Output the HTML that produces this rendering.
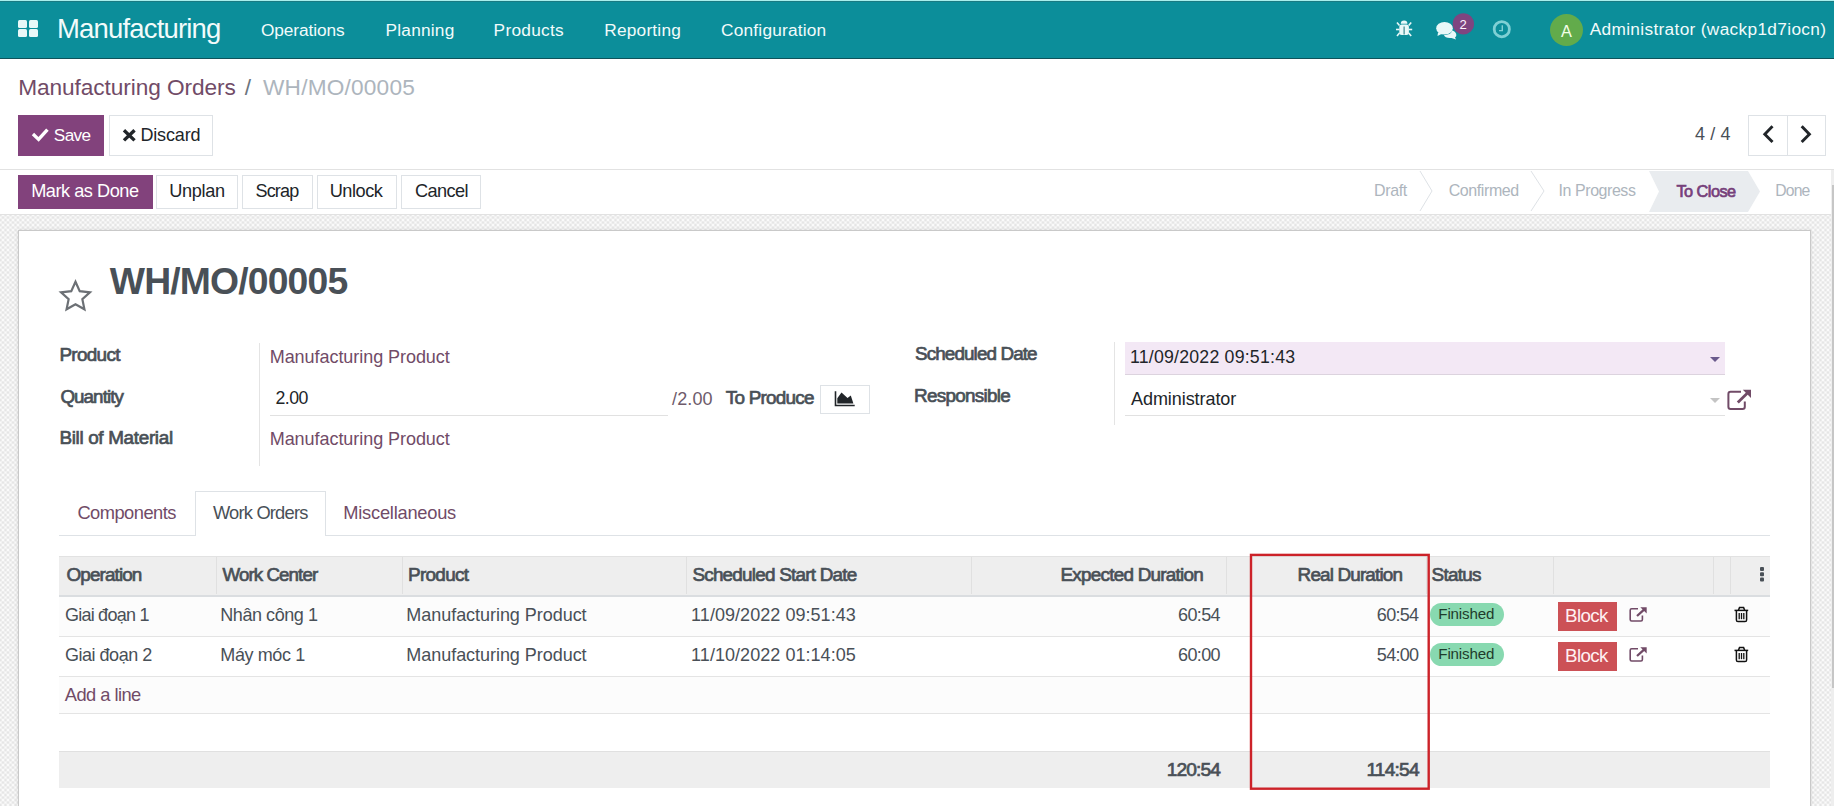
<!DOCTYPE html>
<html><head><meta charset="utf-8"><style>
*{margin:0;padding:0;box-sizing:border-box;}
html,body{width:1834px;height:806px;overflow:hidden;background:#fff;font-family:"Liberation Sans",sans-serif;}
.t{position:absolute;white-space:nowrap;}
.a{position:absolute;}
.bg{position:absolute;left:0;top:215px;width:1834px;height:591px;background-color:#FAFAFA;
 background-image:radial-gradient(circle at 2.5px 2.5px,#E2E2E2 0.6px,rgba(226,226,226,0) 2px),radial-gradient(circle at 2.5px 2.5px,#E2E2E2 0.6px,rgba(226,226,226,0) 2px);
 background-size:5px 5px,5px 5px;background-position:0.5px 0,3px 2.5px;}

</style></head><body>
<!-- navbar -->
<div class="a" style="left:0;top:0;width:1834px;height:59px;background:#0C8E9A;"></div>
<div class="a" style="left:0;top:0;width:1834px;height:1px;background:#A9EEEC;"></div>
<div class="a" style="left:0;top:1px;width:1834px;height:1px;background:#1A7A82;"></div>
<div class="a" style="left:0;top:58px;width:1834px;height:1px;background:#0F535B;"></div>
<!-- grid icon -->
<div class="a" style="left:18px;top:20px;width:9px;height:8px;background:#E9F8F8;border-radius:1.5px;"></div>
<div class="a" style="left:29px;top:20px;width:9px;height:8px;background:#E9F8F8;border-radius:1.5px;"></div>
<div class="a" style="left:18px;top:29px;width:9px;height:8px;background:#E9F8F8;border-radius:1.5px;"></div>
<div class="a" style="left:29px;top:29px;width:9px;height:8px;background:#E9F8F8;border-radius:1.5px;"></div>
<!-- systray -->
<div class="a" style="left:1453px;top:14px;width:21px;height:20px;border-radius:10px;background:#7E4580;"></div>
<div class="a" style="left:1550px;top:14px;width:33px;height:32px;border-radius:50%;background:#62AB4B;"></div>
<!-- control panel -->
<div class="a" style="left:0;top:169px;width:1834px;height:1px;background:#E2E2E2;"></div>
<div class="a" style="left:18px;top:115px;width:86px;height:41px;background:#82427C;"></div>
<div class="a" style="left:109px;top:115px;width:104px;height:41px;border:1px solid #DEE2E6;background:#fff;"></div>
<div class="a" style="left:1748px;top:115px;width:78px;height:41px;border:1px solid #DEE2E6;"></div>
<div class="a" style="left:1787px;top:115px;width:1px;height:41px;background:#DEE2E6;"></div>
<!-- statusbar -->
<div class="a" style="left:0;top:214px;width:1834px;height:1px;background:#E2E2E2;"></div>
<div class="a" style="left:18px;top:175px;width:135px;height:34px;background:#82427C;"></div>
<div class="a" style="left:156px;top:175px;width:82px;height:34px;border:1px solid #DEE2E6;"></div>
<div class="a" style="left:242px;top:175px;width:71px;height:34px;border:1px solid #DEE2E6;"></div>
<div class="a" style="left:317px;top:175px;width:80px;height:34px;border:1px solid #DEE2E6;"></div>
<div class="a" style="left:401px;top:175px;width:80px;height:34px;border:1px solid #DEE2E6;"></div>
<svg class="a" style="left:0;top:0" width="1834" height="806">
 <polyline points="1420,171 1432,191 1420,211" fill="none" stroke="#DEE2E6" stroke-width="1"/>
 <polyline points="1531,171 1544,191 1531,211" fill="none" stroke="#DEE2E6" stroke-width="1"/>
 <polygon points="1649,171 1748,171 1760,191.5 1748,212 1649,212 1659,191.5" fill="#E9ECEF"/>
</svg>

<!-- background -->
<div class="bg"></div>
<!-- sheet -->
<div class="a" style="left:18px;top:230px;width:1793px;height:600px;background:#fff;border:1px solid #C9C9C9;box-shadow:0 0 3px rgba(0,0,0,0.12);"></div>
<!-- sheet separators -->
<div class="a" style="left:259px;top:343px;width:1px;height:123px;background:#E4E4E4;"></div>
<div class="a" style="left:1114px;top:342px;width:1px;height:83px;background:#E4E4E4;"></div>
<div class="a" style="left:270px;top:415px;width:398px;height:1px;background:#E1E1E1;"></div>
<div class="a" style="left:820px;top:385px;width:50px;height:29px;border:1px solid #DEE2E6;"></div>
<div class="a" style="left:1125px;top:342px;width:600px;height:33px;background:#F3E8F5;border-bottom:1px solid #DCD3DE;"></div>
<div class="a" style="left:1125px;top:415px;width:600px;height:1px;background:#E1E1E1;"></div>
<svg class="a" style="left:0;top:0" width="1834" height="806">
 <polygon points="1710,357 1720,357 1715,362" fill="#6A5A8C"/>
 <polygon points="1710,398 1720,398 1715,403" fill="#C4C4C4"/>
 <!-- area chart -->
 <polyline points="835.5,391.2 835.5,405.5 854.7,405.5" fill="none" stroke="#212529" stroke-width="1.6"/>
 <polygon points="837.3,403.5 837.3,398.3 841.5,392.6 847.5,398.1 850.8,395.4 853.4,403.5" fill="#212529"/>
 <!-- external link (responsible) -->
 <path d="M1741,391.8 H1730.6 Q1728.4,391.8 1728.4,394 V406.8 Q1728.4,409 1730.6,409 H1742.6 Q1744.8,409 1744.8,406.8 V401.5" fill="none" stroke="#714B67" stroke-width="2"/>
 <line x1="1737.8" y1="402.5" x2="1747.5" y2="393" stroke="#714B67" stroke-width="2.8"/>
 <polygon points="1742.8,389.8 1751,389.8 1751,398" fill="#714B67"/>
</svg>
<!-- tabs -->
<div class="a" style="left:59px;top:535px;width:1711px;height:1px;background:#DEE2E6;"></div>
<div class="a" style="left:195px;top:491px;width:131px;height:45px;background:#fff;border:1px solid #DEE2E6;border-bottom:none;"></div>
<!-- table -->
<div class="a" style="left:59px;top:556px;width:1711px;height:41px;background:#EEEEEE;border-top:1px solid #E2E2E2;border-bottom:2px solid #DADDE0;"></div>
<div class="a" style="left:59px;top:597px;width:1711px;height:40px;background:#FCFCFC;border-bottom:1px solid #E4E4E4;"></div>
<div class="a" style="left:59px;top:637px;width:1711px;height:40px;background:#FFFFFF;border-bottom:1px solid #E4E4E4;"></div>
<div class="a" style="left:59px;top:677px;width:1711px;height:37px;background:#FCFCFC;border-bottom:1px solid #E4E4E4;"></div>
<div class="a" style="left:59px;top:751px;width:1711px;height:37px;background:#EEEEEE;border-top:1px solid #E0E0E0;"></div>
<div class="a" style="left:216px;top:557px;width:1px;height:37px;background:#E0E0E0;"></div>
<div class="a" style="left:402px;top:557px;width:1px;height:37px;background:#E0E0E0;"></div>
<div class="a" style="left:686px;top:557px;width:1px;height:37px;background:#E0E0E0;"></div>
<div class="a" style="left:971px;top:557px;width:1px;height:37px;background:#E0E0E0;"></div>
<div class="a" style="left:1226px;top:557px;width:1px;height:37px;background:#E0E0E0;"></div>
<div class="a" style="left:1426px;top:557px;width:1px;height:37px;background:#E0E0E0;"></div>
<div class="a" style="left:1553px;top:557px;width:1px;height:37px;background:#E0E0E0;"></div>
<div class="a" style="left:1713px;top:557px;width:1px;height:37px;background:#E0E0E0;"></div>
<div class="a" style="left:1730px;top:557px;width:1px;height:37px;background:#E0E0E0;"></div>
<!-- badges & buttons -->
<div class="a" style="left:1430px;top:603px;width:74px;height:23px;border-radius:11.5px;background:#88D9B0;"></div>
<div class="a" style="left:1430px;top:643px;width:74px;height:23px;border-radius:11.5px;background:#88D9B0;"></div>
<div class="a" style="left:1558px;top:602px;width:59px;height:29px;background:#CC5156;"></div>
<div class="a" style="left:1558px;top:642px;width:59px;height:29px;background:#CC5156;"></div>
<svg class="a" style="left:0;top:0" width="1834" height="806">
 <g id="ext">
 <path d="M1638,608.8 H1631.6 Q1630.2,608.8 1630.2,610.2 V619.6 Q1630.2,621 1631.6,621 H1641 Q1642.4,621 1642.4,619.6 V615.5" fill="none" stroke="#714B67" stroke-width="1.6"/>
 <line x1="1637" y1="616" x2="1644.6" y2="609.2" stroke="#714B67" stroke-width="2.3"/>
 <polygon points="1640.3,607.2 1646.7,607.2 1646.7,613.4" fill="#714B67"/>
 </g>
 <use href="#ext" y="40"/>
 <g id="trash" fill="none" stroke="#111" stroke-width="1.5">
  <line x1="1734.5" y1="610.4" x2="1748.2" y2="610.4"/>
  <path d="M1738.5,610 L1739.5,607.6 H1743.6 L1744.6,610"/>
  <path d="M1736.4,610.5 V620 Q1736.4,621.6 1738,621.6 H1745 Q1746.6,621.6 1746.6,620 V610.5"/>
  <line x1="1739.2" y1="613" x2="1739.2" y2="619.2" stroke-width="1.3"/>
  <line x1="1741.5" y1="613" x2="1741.5" y2="619.2" stroke-width="1.3"/>
  <line x1="1743.8" y1="613" x2="1743.8" y2="619.2" stroke-width="1.3"/>
 </g>
 <use href="#trash" y="40"/>
 <g fill="#495057"><rect x="1760" y="567" width="4" height="4" rx="1"/><rect x="1760" y="572.3" width="4" height="4" rx="1"/><rect x="1760" y="577.5" width="4" height="4" rx="1"/></g>
 <!-- red box -->
 <rect x="1251" y="554.9" width="177.7" height="233.8" fill="none" stroke="#CC2229" stroke-width="2.4"/>
</svg>
<div class="a" style="left:1831px;top:170px;width:3px;height:636px;background:#EEEEEE;"></div>
<div class="a" style="left:1832px;top:185px;width:1.5px;height:503px;background:#C6C6C6;"></div>
<svg class="a" style="left:0;top:0" width="1834" height="806">
 <!-- bug -->
 <g fill="#E9F8F8" stroke="#E9F8F8">
  <path d="M1400.8,23.8 A3.3,3.2 0 0 1 1407.4,23.8 Z" stroke="none"/>
  <rect x="1399.3" y="24.6" width="9.6" height="10.4" rx="2.5" stroke="none"/>
  <g stroke-width="1.6" fill="none">
   <line x1="1399.5" y1="25.5" x2="1397" y2="22.5"/><line x1="1408.7" y1="25.5" x2="1411.2" y2="22.5"/>
   <line x1="1396" y1="29.5" x2="1399.5" y2="29.5"/><line x1="1408.7" y1="29.5" x2="1412.2" y2="29.5"/>
   <line x1="1399.5" y1="33" x2="1397" y2="36"/><line x1="1408.7" y1="33" x2="1411.2" y2="36"/>
  </g>
 </g>
 <rect x="1403.4" y="26.5" width="1.5" height="8" fill="#5E9EA4"/>
 <!-- chat -->
 <ellipse cx="1444.5" cy="28.2" rx="8.3" ry="6.3" fill="#E9F8F8"/>
 <path d="M1438,32.5 L1437.5,36 L1442.5,33.5 Z" fill="#E9F8F8"/>
 <path d="M1452,30.5 C1456.5,31.5 1457.5,36 1455,37.5 L1456,39.5 L1451.5,38 C1447.5,38.5 1444.5,37 1444,35 C1448.5,35 1451.5,33.5 1452,30.5 Z" fill="#E9F8F8"/>
 <!-- badge over chat -->
 <circle cx="1463.3" cy="23.8" r="10.6" fill="#7E4580"/>
 <!-- clock -->
 <circle cx="1501.8" cy="29.2" r="7.6" fill="none" stroke="#7FD0D4" stroke-width="2.8"/>
 <polyline points="1502.3,25.3 1502.3,30.6 1499,30.6" fill="none" stroke="#7FD0D4" stroke-width="1.4"/>
 <!-- check -->
 <polyline points="34.2,135.2 38.6,139.4 46.3,130.8" fill="none" stroke="#FFFFFF" stroke-width="3.4" stroke-linecap="square"/>
 <!-- x -->
 <g stroke="#212529" stroke-width="3.4" stroke-linecap="square">
  <line x1="125.2" y1="131.5" x2="133.3" y2="139.2"/><line x1="133.3" y1="131.5" x2="125.2" y2="139.2"/>
 </g>
 <!-- pager chevrons -->
 <polyline points="1771.5,127.3 1764.8,134.2 1771.5,141" fill="none" stroke="#212529" stroke-width="2.9" stroke-linecap="square"/>
 <polyline points="1802.7,127.3 1809.4,134.2 1802.7,141" fill="none" stroke="#212529" stroke-width="2.9" stroke-linecap="square"/>
 <!-- star -->
 <polygon id="star" fill="none" stroke="#6C7075" stroke-width="2.2" stroke-linejoin="miter" points="75.50,281.80 79.73,291.18 89.96,292.30 82.35,299.22 84.43,309.30 75.50,304.20 66.57,309.30 68.65,299.22 61.04,292.30 71.27,291.18"/>
</svg>

<div class="t" style="left:57.00px;top:15.44px;font-size:27.47px;line-height:27.47px;color:#F2FBFB;letter-spacing:-0.816px;">Manufacturing</div>
<div class="t" style="left:261.00px;top:21.65px;font-size:17.3px;line-height:17.3px;color:#F2FBFB;letter-spacing:-0.099px;">Operations</div>
<div class="t" style="left:385.60px;top:21.65px;font-size:17.3px;line-height:17.3px;color:#F2FBFB;letter-spacing:0.207px;">Planning</div>
<div class="t" style="left:493.60px;top:21.65px;font-size:17.3px;line-height:17.3px;color:#F2FBFB;letter-spacing:0.263px;">Products</div>
<div class="t" style="left:604.30px;top:21.65px;font-size:17.3px;line-height:17.3px;color:#F2FBFB;letter-spacing:0.198px;">Reporting</div>
<div class="t" style="left:721.10px;top:21.65px;font-size:17.3px;line-height:17.3px;color:#F2FBFB;letter-spacing:0.193px;">Configuration</div>
<div class="t" style="left:1589.70px;top:21.45px;font-size:17.3px;line-height:17.3px;color:#F2FBFB;letter-spacing:0.320px;">Administrator (wackp1d7iocn)</div>
<div class="t" style="left:1561.00px;top:22.82px;font-size:16.28px;line-height:16.28px;color:#F4FFE8;">A</div>
<div class="t" style="left:1459.60px;top:17.63px;font-size:13.08px;line-height:13.08px;color:#FFF4FF;">2</div>
<div class="t" style="left:18.20px;top:76.21px;font-size:22.67px;line-height:22.67px;color:#714B67;letter-spacing:-0.073px;">Manufacturing Orders</div>
<div class="t" style="left:244.70px;top:76.21px;font-size:22.67px;line-height:22.67px;color:#6C757D;">/</div>
<div class="t" style="left:263.00px;top:76.21px;font-size:22.67px;line-height:22.67px;color:#ADB5BD;letter-spacing:0.197px;">WH/MO/00005</div>
<div class="t" style="left:53.80px;top:126.75px;font-size:17.19px;line-height:17.19px;color:#FFFFFF;letter-spacing:-0.606px;">Save</div>
<div class="t" style="left:140.40px;top:126.04px;font-size:18.02px;line-height:18.02px;color:#212529;letter-spacing:-0.158px;">Discard</div>
<div class="t" style="left:1695.10px;top:125.14px;font-size:18.02px;line-height:18.02px;color:#495057;letter-spacing:0.066px;">4 / 4</div>
<div class="t" style="left:31.20px;top:182.02px;font-size:18.17px;line-height:18.17px;color:#FFFFFF;letter-spacing:-0.474px;">Mark as Done</div>
<div class="t" style="left:169.30px;top:182.02px;font-size:18.17px;line-height:18.17px;color:#212529;letter-spacing:-0.348px;">Unplan</div>
<div class="t" style="left:255.50px;top:182.16px;font-size:18.0px;line-height:18.0px;color:#212529;letter-spacing:-0.828px;">Scrap</div>
<div class="t" style="left:329.70px;top:182.02px;font-size:18.17px;line-height:18.17px;color:#212529;letter-spacing:-0.464px;">Unlock</div>
<div class="t" style="left:415.00px;top:182.02px;font-size:18.17px;line-height:18.17px;color:#212529;letter-spacing:-0.597px;">Cancel</div>
<div class="t" style="left:1374.00px;top:183.06px;font-size:15.99px;line-height:15.99px;color:#ADB5BD;letter-spacing:-0.349px;">Draft</div>
<div class="t" style="left:1448.70px;top:183.06px;font-size:15.99px;line-height:15.99px;color:#ADB5BD;letter-spacing:-0.405px;">Confirmed</div>
<div class="t" style="left:1558.60px;top:183.06px;font-size:15.99px;line-height:15.99px;color:#ADB5BD;letter-spacing:-0.444px;">In Progress</div>
<div class="t" style="left:1775.30px;top:183.29px;font-size:15.72px;line-height:15.72px;color:#ADB5BD;letter-spacing:-0.845px;">Done</div>
<div class="t" style="left:1676.50px;top:182.72px;font-size:16.28px;line-height:16.28px;color:#76407A;-webkit-text-stroke:0.7px #76407A;letter-spacing:-0.534px;">To Close</div>
<div class="t" style="left:109.80px;top:262.60px;font-size:37.32px;line-height:37.32px;color:#495057;font-weight:700;letter-spacing:-0.841px;">WH/MO/00005</div>
<div class="t" style="left:59.40px;top:345.60px;font-size:18.9px;line-height:18.9px;color:#495057;-webkit-text-stroke:0.7px #495057;letter-spacing:-0.676px;">Product</div>
<div class="t" style="left:60.40px;top:387.51px;font-size:18.77px;line-height:18.77px;color:#495057;-webkit-text-stroke:0.7px #495057;letter-spacing:-0.915px;">Quantity</div>
<div class="t" style="left:59.40px;top:428.50px;font-size:18.9px;line-height:18.9px;color:#495057;-webkit-text-stroke:0.7px #495057;letter-spacing:-0.329px;">Bill of Material</div>
<div class="t" style="left:915.00px;top:345.11px;font-size:18.88px;line-height:18.88px;color:#495057;-webkit-text-stroke:0.7px #495057;letter-spacing:-0.894px;">Scheduled Date</div>
<div class="t" style="left:914.00px;top:387.40px;font-size:18.9px;line-height:18.9px;color:#495057;-webkit-text-stroke:0.7px #495057;letter-spacing:-0.716px;">Responsible</div>
<div class="t" style="left:269.70px;top:348.44px;font-size:18.02px;line-height:18.02px;color:#714B67;letter-spacing:-0.058px;">Manufacturing Product</div>
<div class="t" style="left:275.60px;top:390.39px;font-size:17.73px;line-height:17.73px;color:#212529;letter-spacing:-0.610px;">2.00</div>
<div class="t" style="left:269.70px;top:430.34px;font-size:18.02px;line-height:18.02px;color:#714B67;letter-spacing:-0.058px;">Manufacturing Product</div>
<div class="t" style="left:672.00px;top:389.74px;font-size:18.02px;line-height:18.02px;color:#6E5B6B;letter-spacing:0.138px;">/2.00</div>
<div class="t" style="left:725.70px;top:389.00px;font-size:18.9px;line-height:18.9px;color:#495057;-webkit-text-stroke:0.7px #495057;letter-spacing:-0.750px;">To Produce</div>
<div class="t" style="left:1130.00px;top:349.09px;font-size:17.73px;line-height:17.73px;color:#212529;letter-spacing:0.211px;">11/09/2022 09:51:43</div>
<div class="t" style="left:1131.00px;top:390.34px;font-size:18.02px;line-height:18.02px;color:#212529;letter-spacing:-0.069px;">Administrator</div>
<div class="t" style="left:77.40px;top:503.80px;font-size:18.31px;line-height:18.31px;color:#714B67;letter-spacing:-0.521px;">Components</div>
<div class="t" style="left:212.90px;top:503.80px;font-size:18.31px;line-height:18.31px;color:#495057;letter-spacing:-0.791px;">Work Orders</div>
<div class="t" style="left:343.30px;top:503.80px;font-size:18.31px;line-height:18.31px;color:#714B67;letter-spacing:-0.249px;">Miscellaneous</div>
<div class="t" style="left:66.50px;top:565.50px;font-size:18.9px;line-height:18.9px;color:#495057;-webkit-text-stroke:0.7px #495057;letter-spacing:-0.894px;">Operation</div>
<div class="t" style="left:222.50px;top:565.65px;font-size:18.72px;line-height:18.72px;color:#495057;-webkit-text-stroke:0.7px #495057;letter-spacing:-0.900px;">Work Center</div>
<div class="t" style="left:408.00px;top:565.50px;font-size:18.9px;line-height:18.9px;color:#495057;-webkit-text-stroke:0.7px #495057;letter-spacing:-0.692px;">Product</div>
<div class="t" style="left:692.40px;top:565.50px;font-size:18.9px;line-height:18.9px;color:#495057;-webkit-text-stroke:0.7px #495057;letter-spacing:-0.777px;">Scheduled Start Date</div>
<div class="t" style="left:1060.40px;top:565.50px;font-size:18.9px;line-height:18.9px;color:#495057;-webkit-text-stroke:0.7px #495057;letter-spacing:-0.751px;">Expected Duration</div>
<div class="t" style="left:1297.60px;top:565.50px;font-size:18.9px;line-height:18.9px;color:#495057;-webkit-text-stroke:0.7px #495057;letter-spacing:-0.850px;">Real Duration</div>
<div class="t" style="left:1431.50px;top:565.50px;font-size:18.9px;line-height:18.9px;color:#495057;-webkit-text-stroke:0.7px #495057;letter-spacing:-0.722px;">Status</div>
<div class="t" style="left:64.90px;top:606.14px;font-size:18.02px;line-height:18.02px;color:#495057;letter-spacing:-0.763px;">Giai đoạn 1</div>
<div class="t" style="left:220.30px;top:606.14px;font-size:18.02px;line-height:18.02px;color:#495057;letter-spacing:-0.455px;">Nhân công 1</div>
<div class="t" style="left:406.30px;top:606.14px;font-size:18.02px;line-height:18.02px;color:#495057;letter-spacing:-0.048px;">Manufacturing Product</div>
<div class="t" style="left:691.10px;top:606.14px;font-size:18.02px;line-height:18.02px;color:#495057;letter-spacing:0.042px;">11/09/2022 09:51:43</div>
<div class="t" style="left:1178.00px;top:606.14px;font-size:18.02px;line-height:18.02px;color:#495057;letter-spacing:-0.616px;">60:54</div>
<div class="t" style="left:1376.80px;top:606.14px;font-size:18.02px;line-height:18.02px;color:#495057;letter-spacing:-0.691px;">60:54</div>
<div class="t" style="left:1438.30px;top:605.60px;font-size:15.12px;line-height:15.12px;color:#1F3B2C;letter-spacing:-0.144px;">Finished</div>
<div class="t" style="left:1565.10px;top:606.52px;font-size:18.75px;line-height:18.75px;color:#FFF0F2;letter-spacing:-0.644px;">Block</div>
<div class="t" style="left:64.90px;top:646.24px;font-size:18.02px;line-height:18.02px;color:#495057;letter-spacing:-0.473px;">Giai đoạn 2</div>
<div class="t" style="left:220.30px;top:646.24px;font-size:18.02px;line-height:18.02px;color:#495057;letter-spacing:-0.397px;">Máy móc 1</div>
<div class="t" style="left:406.30px;top:646.24px;font-size:18.02px;line-height:18.02px;color:#495057;letter-spacing:-0.048px;">Manufacturing Product</div>
<div class="t" style="left:691.10px;top:646.24px;font-size:18.02px;line-height:18.02px;color:#495057;letter-spacing:0.042px;">11/10/2022 01:14:05</div>
<div class="t" style="left:1178.00px;top:646.24px;font-size:18.02px;line-height:18.02px;color:#495057;letter-spacing:-0.616px;">60:00</div>
<div class="t" style="left:1376.80px;top:646.24px;font-size:18.02px;line-height:18.02px;color:#495057;letter-spacing:-0.691px;">54:00</div>
<div class="t" style="left:1438.30px;top:645.70px;font-size:15.12px;line-height:15.12px;color:#1F3B2C;letter-spacing:-0.144px;">Finished</div>
<div class="t" style="left:1565.10px;top:646.62px;font-size:18.75px;line-height:18.75px;color:#FFF0F2;letter-spacing:-0.644px;">Block</div>
<div class="t" style="left:64.80px;top:685.90px;font-size:18.31px;line-height:18.31px;color:#714B67;letter-spacing:-0.545px;">Add a line</div>
<div class="t" style="left:1166.70px;top:759.95px;font-size:19.19px;line-height:19.19px;color:#495057;-webkit-text-stroke:0.7px #495057;letter-spacing:-0.883px;">120:54</div>
<div class="t" style="left:1366.40px;top:759.95px;font-size:19.19px;line-height:19.19px;color:#495057;-webkit-text-stroke:0.7px #495057;letter-spacing:-0.798px;">114:54</div>
</body></html>
